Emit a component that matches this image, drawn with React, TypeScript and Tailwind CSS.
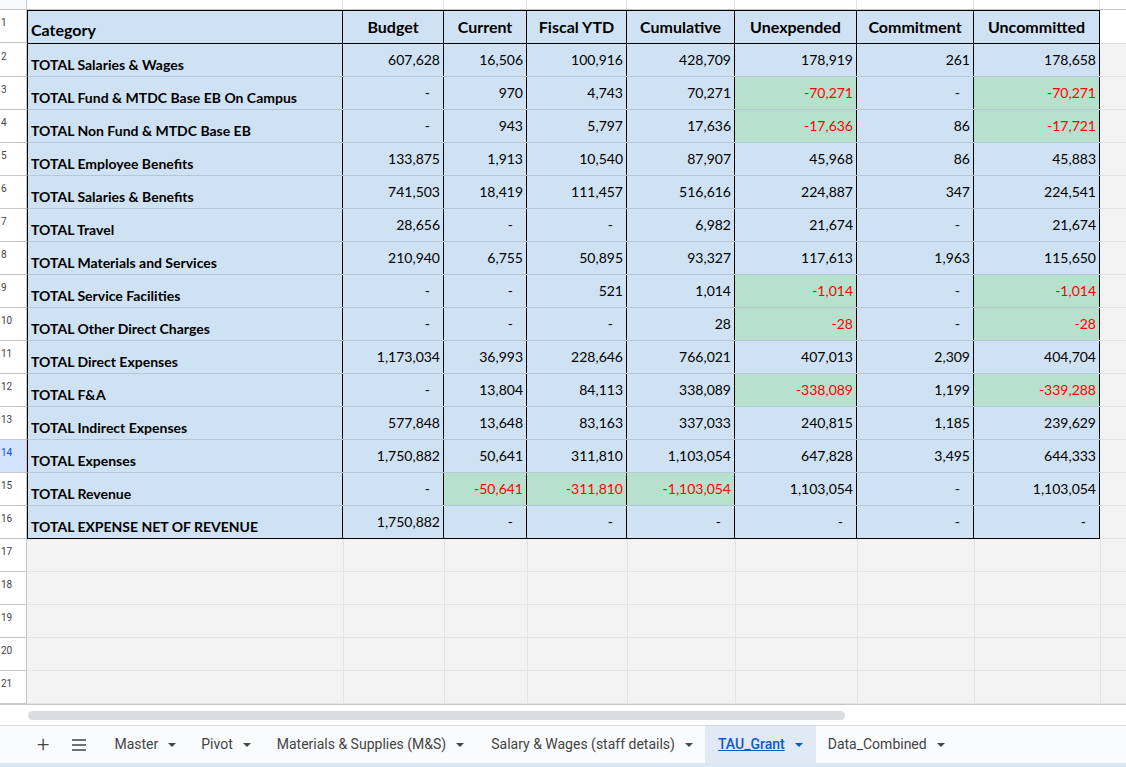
import React from "react";

const widths = [316, 101, 83, 100, 108, 122, 117, 126];
const headers = ["Budget", "Current", "Fiscal YTD", "Cumulative", "Unexpended", "Commitment", "Uncommitted"];
type Row = [string, string[]];
const rows: Row[] = [
  ["TOTAL Salaries & Wages", ["607,628", "16,506", "100,916", "428,709", "178,919", "261", "178,658"]],
  ["TOTAL Fund & MTDC Base EB On Campus", ["-", "970", "4,743", "70,271", "-70,271", "-", "-70,271"]],
  ["TOTAL Non Fund & MTDC Base EB", ["-", "943", "5,797", "17,636", "-17,636", "86", "-17,721"]],
  ["TOTAL Employee Benefits", ["133,875", "1,913", "10,540", "87,907", "45,968", "86", "45,883"]],
  ["TOTAL Salaries & Benefits", ["741,503", "18,419", "111,457", "516,616", "224,887", "347", "224,541"]],
  ["TOTAL Travel", ["28,656", "-", "-", "6,982", "21,674", "-", "21,674"]],
  ["TOTAL Materials and Services", ["210,940", "6,755", "50,895", "93,327", "117,613", "1,963", "115,650"]],
  ["TOTAL Service Facilities", ["-", "-", "521", "1,014", "-1,014", "-", "-1,014"]],
  ["TOTAL Other Direct Charges", ["-", "-", "-", "28", "-28", "-", "-28"]],
  ["TOTAL Direct Expenses", ["1,173,034", "36,993", "228,646", "766,021", "407,013", "2,309", "404,704"]],
  ["TOTAL F&A", ["-", "13,804", "84,113", "338,089", "-338,089", "1,199", "-339,288"]],
  ["TOTAL Indirect Expenses", ["577,848", "13,648", "83,163", "337,033", "240,815", "1,185", "239,629"]],
  ["TOTAL Expenses", ["1,750,882", "50,641", "311,810", "1,103,054", "647,828", "3,495", "644,333"]],
  ["TOTAL Revenue", ["-", "-50,641", "-311,810", "-1,103,054", "1,103,054", "-", "1,103,054"]],
  ["TOTAL EXPENSE NET OF REVENUE", ["1,750,882", "-", "-", "-", "-", "-", "-"]],
];

const font = { fontFamily: "Lato, 'Open Sans', sans-serif" };

function RowNum({ n, active }: { n: number; active?: boolean }) {
  return (
    <div
      className={`w-[27px] shrink-0 h-[33px] border-b border-r border-[#c4c7c5] text-[10px] pl-[1px] pt-[8px] leading-none ${
        active ? "bg-[#d3e3fd] text-[#0b57d0]" : "bg-white text-[#444]"
      }`}
      style={{ fontFamily: "Roboto, sans-serif" }}
    >
      {n}
    </div>
  );
}

function Dropdown({ color = "#444" }: { color?: string }) {
  return (
    <svg width="8" height="4" viewBox="0 0 8 4" className="ml-[10px]">
      <path d="M0 0h8L4 4z" fill={color} />
    </svg>
  );
}

export default function App() {
  return (
    <div className="w-[1126px] h-[767px] overflow-hidden bg-white flex flex-col" style={font}>
      {/* top partial row */}
      <div className="flex h-[10px] border-b border-[#c4c7c5]">
        <div className="w-[27px] bg-[#f8f9fa] border-r border-[#c4c7c5]" />
        {widths.map((w, i) => (
          <div key={i} style={{ width: w }} className="border-r border-[#e2e2e2]" />
        ))}
      </div>
      {/* header row */}
      <div className="flex">
        <RowNum n={1} />
        <div className="flex border-l border-t border-black bg-[#cfe2f3] border-b-[1.5px] border-b-black">
          <div style={{ width: 315 }} className="h-[32px] flex items-end pl-[3px] pb-[1px] text-[16px] font-bold text-black border-r border-black">
            Category
          </div>
          {headers.map((h, i) => (
            <div key={i} style={{ width: widths[i + 1] }} className="h-[32px] flex justify-center pt-[6px] text-[16px] font-bold text-black border-r border-black leading-tight">
              {h}
            </div>
          ))}
        </div>
        <div className="flex-1 border-b border-[#e2e2e2]" />
      </div>
      {rows.map(([label, vals], ri) => (
        <div key={ri} className="flex">
          <RowNum n={ri + 2} active={ri + 2 === 14} />
          <div className={`flex border-l border-black bg-[#cfe2f3] ${ri === rows.length - 1 ? "border-b border-b-black" : "border-b border-b-[#b5c7d8]"}`}>
            <div style={{ width: 315 }} className="h-[32px] flex items-end pl-[3px] pb-[1px] text-[14px] font-bold text-black border-r border-black">
              {label}
            </div>
            {vals.map((v, i) => {
              const neg = v.startsWith("-") && v.length > 1;
              return (
                <div
                  key={i}
                  style={{ width: widths[i + 1] }}
                  className={`h-[32px] flex justify-end pr-[3px] pt-[7px] text-[14px] border-r border-black leading-tight ${
                    neg ? "bg-[#b7e1cd] text-[#ff0000]" : "text-black"
                  }`}
                >
                  {v === "-" ? <span className="pr-[10px]">-</span> : v}
                </div>
              );
            })}
          </div>
          <div className="flex-1 border-b border-[#e2e2e2] bg-[#f3f3f3]" />
        </div>
      ))}
      {[17, 18, 19, 20, 21].map((n) => (
        <div key={n} className="flex">
          <RowNum n={n} />
          {widths.map((w, i) => (
            <div key={i} style={{ width: i === 0 ? w + 1 : w }} className="h-[33px] bg-[#f3f3f3] border-r border-b border-[#e2e2e2]" />
          ))}
          <div className="flex-1 bg-[#f3f3f3] border-b border-[#e2e2e2]" />
        </div>
      ))}
      {/* scrollbar */}
      <div className="flex-1 flex items-center border-t border-[#c4c7c5] pl-[28px] bg-white">
        <div className="w-[817px] h-[9px] rounded-full bg-[#dadce0]" />
      </div>
      {/* tab bar */}
      <div className="h-[38px] shrink-0 bg-[#f9fbfd] border-t border-[#dadce0] flex items-center text-[14px] text-[#444]" style={{ fontFamily: "Roboto, sans-serif" }}>
        <span className="ml-[37px] text-[22px] font-light leading-none">+</span>
        <svg width="16" height="12" viewBox="0 0 16 12" className="ml-[22px]">
          <path d="M1 1h14M1 6h14M1 11h14" stroke="#444" strokeWidth="1.6" />
        </svg>
        <div className="ml-[27px] flex items-center">Master<Dropdown /></div>
        <div className="ml-[25px] flex items-center">Pivot<Dropdown /></div>
        <div className="ml-[26px] flex items-center">Materials &amp; Supplies (M&amp;S)<Dropdown /></div>
        <div className="ml-[27px] flex items-center">Salary &amp; Wages (staff details)<Dropdown /></div>
        <div className="ml-[12px] h-full px-[13px] bg-[#e1e9f7] text-[#0b57d0] font-medium flex items-center underline">
          TAU_Grant<Dropdown color="#0b57d0" />
        </div>
        <div className="ml-[12px] flex items-center">Data_Combined<Dropdown /></div>
      </div>
      <div className="h-[4px] shrink-0 bg-[#dbe6f6]" />
    </div>
  );
}
